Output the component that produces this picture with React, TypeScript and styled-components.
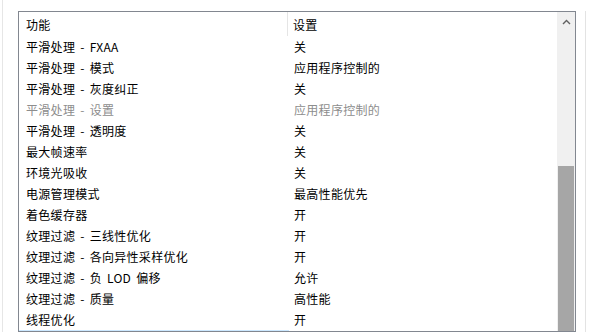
import React from 'react';
import styled, { createGlobalStyle } from 'styled-components';

interface Setting {
  name: string;
  value: string;
  disabled?: boolean;
}

const settings: Setting[] = [
  { name: '平滑处理 - FXAA', value: '关' },
  { name: '平滑处理 - 模式', value: '应用程序控制的' },
  { name: '平滑处理 - 灰度纠正', value: '关' },
  { name: '平滑处理 - 设置', value: '应用程序控制的', disabled: true },
  { name: '平滑处理 - 透明度', value: '关' },
  { name: '最大帧速率', value: '关' },
  { name: '环境光吸收', value: '关' },
  { name: '电源管理模式', value: '最高性能优先' },
  { name: '着色缓存器', value: '开' },
  { name: '纹理过滤 - 三线性优化', value: '开' },
  { name: '纹理过滤 - 各向异性采样优化', value: '开' },
  { name: '纹理过滤 - 负 LOD 偏移', value: '允许' },
  { name: '纹理过滤 - 质量', value: '高性能' },
  { name: '线程优化', value: '开' },
];

const GlobalStyle = createGlobalStyle`
  html, body {
    margin: 0;
    padding: 0;
    background: #fff;
    overflow: hidden;
  }
  body {
    font-family: "Microsoft YaHei", "Noto Sans CJK SC", "Noto Sans", sans-serif;
    font-size: 12px;
    letter-spacing: 0.3px;
    word-spacing: 2px;
    color: #000;
  }
`;

const Page = styled.div`
  width: 591px;
  height: 332px;
  padding-left: 2px;
  box-sizing: border-box;
  display: flex;
  overflow: hidden;
`;

const Frame = styled.div`
  flex: 1;
  display: flex;
  align-items: flex-start;
  border-left: 1px solid #e6e6e6;
  padding: 11px 0 0 15px;
`;

const ListBox = styled.div`
  width: 558px;
  height: 321px;
  box-sizing: border-box;
  border: 1px solid #828790;
  display: flex;
  overflow: hidden;
`;

const Table = styled.div`
  flex: 1;
  display: flex;
  flex-direction: column;
`;

const HeaderRow = styled.div`
  height: 24px;
  display: grid;
  grid-template-columns: 269px 1fr;
  flex-shrink: 0;
`;

const HeaderCell = styled.div<{ $divider?: boolean }>`
  display: flex;
  align-items: center;
  padding-left: ${({ $divider }) => ($divider ? '5px' : '7px')};
  border-right: ${({ $divider }) => ($divider ? 'none' : '1px solid #e5e5e5')};
`;

const Row = styled.div`
  height: 21px;
  display: grid;
  grid-template-columns: 270px 1fr;
  flex-shrink: 0;
`;

const Cell = styled.div<{ $first?: boolean; $disabled?: boolean; $selected?: boolean }>`
  display: flex;
  align-items: center;
  padding-left: ${({ $first }) => ($first ? '7px' : '5px')};
  color: ${({ $disabled }) => ($disabled ? '#8d8d8d' : '#000')};
  background: ${({ $selected }) => ($selected ? '#cce8ff' : 'transparent')};
  white-space: nowrap;
`;

const Scrollbar = styled.div`
  width: 18px;
  background: #f0f0f0;
  display: flex;
  flex-direction: column;
  flex-shrink: 0;
`;

const ArrowButton = styled.div`
  height: 20px;
  display: flex;
  align-items: center;
  justify-content: center;
`;

const Track = styled.div`
  flex: 1;
  display: flex;
  flex-direction: column;
  padding: 0 1px;
`;

const Thumb = styled.div`
  margin-top: 134px;
  flex: 1;
  background: #a6a6a6;
`;

const Spacer = styled.div`
  width: 9px;
`;

const RightEdge = styled.div`
  flex: 1;
  align-self: stretch;
  border-left: 1px solid #e3e3e3;
`;

export default function App() {
  return (
    <>
      <GlobalStyle />
      <Page>
        <Frame>
          <ListBox>
            <Table>
              <HeaderRow>
                <HeaderCell>功能</HeaderCell>
                <HeaderCell $divider>设置</HeaderCell>
              </HeaderRow>
              {settings.map((s) => (
                <Row key={s.name}>
                  <Cell $first $disabled={s.disabled}>
                    {s.name}
                  </Cell>
                  <Cell $disabled={s.disabled}>{s.value}</Cell>
                </Row>
              ))}
              {/* next row is selected but scrolled just out of view */}
              <Row>
                <Cell $first $selected />
                <Cell />
              </Row>
            </Table>
            <Scrollbar>
              <ArrowButton>
                <svg width="9" height="6" viewBox="0 0 9 6">
                  <path d="M1 5 L4.5 1.5 L8 5" fill="none" stroke="#606060" strokeWidth="1.4" />
                </svg>
              </ArrowButton>
              <Track>
                <Thumb />
              </Track>
            </Scrollbar>
          </ListBox>
          <Spacer />
          <RightEdge />
        </Frame>
      </Page>
    </>
  );
}
